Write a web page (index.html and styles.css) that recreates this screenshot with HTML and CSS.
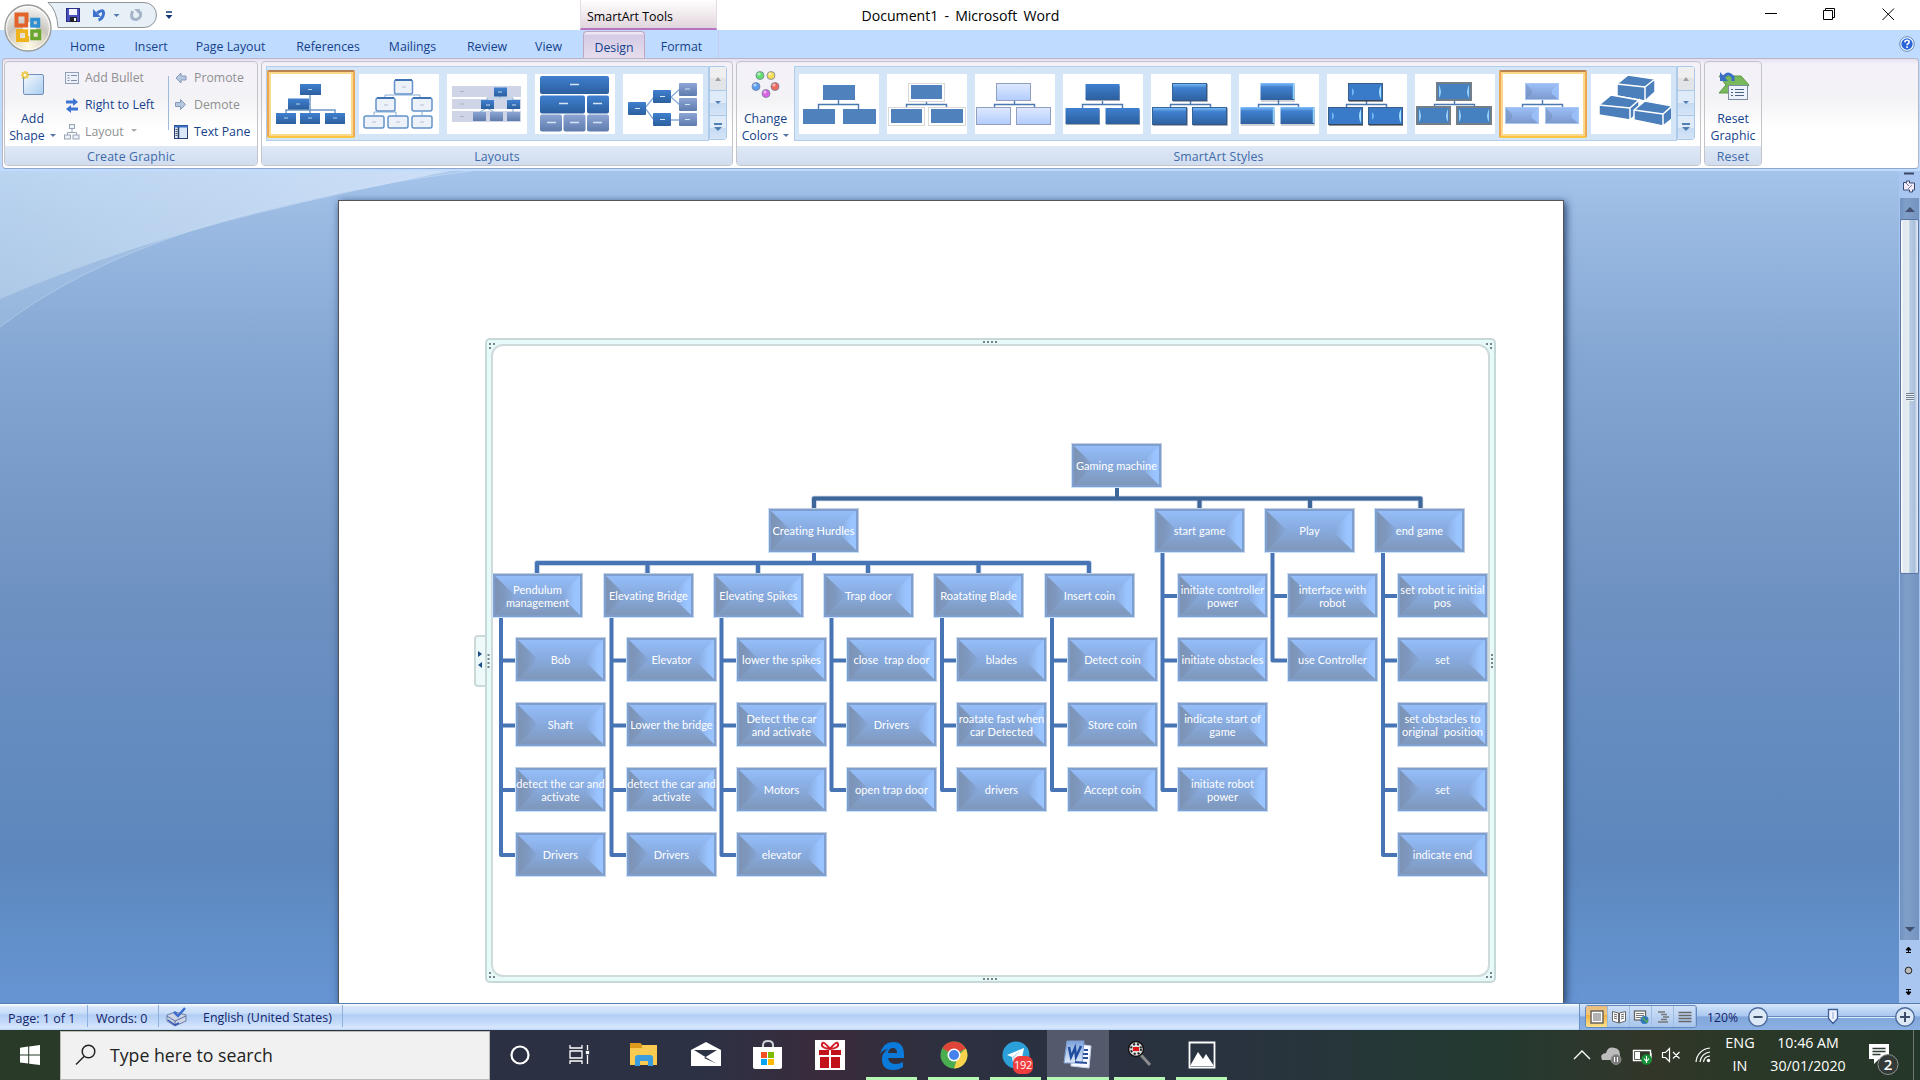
FILE: index.html
```html
<!DOCTYPE html>
<html lang="en">
<head>
<meta charset="utf-8">
<title>Document1 - Microsoft Word</title>
<link rel="stylesheet" href="styles.css">
</head>
<body>
<svg class="defs" width="0" height="0" aria-hidden="true">
  <defs>
    <linearGradient id="blue" x1="0" y1="0" x2="0" y2="1"><stop offset="0" stop-color="#3f80cf"/><stop offset="1" stop-color="#2c5f9e"/></linearGradient>
    <linearGradient id="pale" x1="0" y1="0" x2="0" y2="1"><stop offset="0" stop-color="#dfe9ff"/><stop offset="1" stop-color="#b2ccfd"/></linearGradient>
    <linearGradient id="gloss" x1="0" y1="0" x2="0" y2="1"><stop offset="0" stop-color="#7fc0fb"/><stop offset=".25" stop-color="#3f80cf"/><stop offset="1" stop-color="#2f619f"/></linearGradient>
    <linearGradient id="soft" x1="0" y1="0" x2="0" y2="1"><stop offset="0" stop-color="#9cbff8"/><stop offset="1" stop-color="#7d99cc"/></linearGradient>
    <linearGradient id="grey" x1="0" y1="0" x2="0" y2="1"><stop offset="0" stop-color="#8ca5d4"/><stop offset="1" stop-color="#5f7cae"/></linearGradient>
    <linearGradient id="sheet" x1="0" y1="0" x2="1" y2="1"><stop offset="0" stop-color="#f5faff"/><stop offset="1" stop-color="#a9cdf0"/></linearGradient>
    <linearGradient id="wbox" x1="0" y1="0" x2="0" y2="1"><stop offset="0" stop-color="#7da3dc"/><stop offset="1" stop-color="#dfe9f8"/></linearGradient>
    <radialGradient id="orb" cx=".5" cy=".9" r=".9"><stop offset="0" stop-color="#fffbe6"/><stop offset=".45" stop-color="#d9d3c4"/><stop offset=".55" stop-color="#c9c6c0"/><stop offset="1" stop-color="#fbfbfb"/></radialGradient>
    <linearGradient id="sky" x1="0" y1="0" x2="1" y2="0"><stop offset="0" stop-color="#d5e9f7" stop-opacity=".32"/><stop offset="1" stop-color="#dbe7fb" stop-opacity=".7"/></linearGradient>
    <symbol id="links" viewBox="0 0 80 60"><path d="M39.500 26v5M19.500 35v-4.500h40V35" fill="none" stroke="#4a78b0" stroke-width="1.400"/></symbol>
  </defs>
</svg>

<div class="app">
  <header class="titlebar">
    <svg class="qat" width="180" height="30" viewBox="0 0 180 30">
      <path d="M48 2.500H144a12.500 12.500 0 0 1 0 25H58Q57 10 48 2.500Z" fill="#e8f0f7" stroke="#8f9398"/>
      <rect x="66.500" y="8.500" width="13" height="13" fill="#4b50c0" stroke="#2b2d80"/><rect x="69" y="9" width="8" height="6" fill="#f4f6ff"/><rect x="70" y="17" width="7" height="5" fill="#222"/><rect x="74" y="18" width="2" height="3" fill="#fff"/>
      <path d="M97 13q7-5 6.500 1q-1 5-5 6" fill="none" stroke="#3d73cc" stroke-width="3"/><path d="M93 9v8h8z" fill="#3d73cc"/>
      <path d="M113.500 14h6l-3 3z" fill="#5079ae"/>
      <path d="M132.500 11q-3 9 4 8.500q6-2 3.500-8" fill="none" stroke="#a5b4c9" stroke-width="3"/><path d="M134 9h6v6z" fill="#a5b4c9"/>
      <path d="M166 12h6" stroke="#173a74" stroke-width="1.500"/><path d="M165.500 15h7l-3.500 4z" fill="#173a74"/>
    </svg>
    <div class="tools">SmartArt Tools</div>
    <div class="doc-title">Document1 - Microsoft Word</div>
    <svg class="winbtns" width="160" height="30" viewBox="0 0 160 30" fill="none" stroke="#000" stroke-width="1">
      <path d="M5 13.500h12"/><path d="M63.500 10.500h9v9h-9zM65.500 10.500v-2h9v9h-2"/><path d="M122.500 8.500l11.500 11.500M134 8.500L122.500 20"/>
    </svg>
  </header>
  <svg class="orb" width="50" height="50" viewBox="0 0 50 50">
    <circle cx="25" cy="25" r="23" fill="url(#orb)" stroke="#9a9c98" stroke-width="1.300"/><circle cx="25" cy="25" r="21.500" fill="none" stroke="#fff" stroke-opacity=".8"/>
    <g fill="none" stroke-width="4"><rect x="13.500" y="11.500" width="10" height="11" stroke="#e2622b"/><rect x="29" y="16.500" width="6.500" height="6.500" stroke="#2e90d3" stroke-width="3.500"/><rect x="15" y="28" width="9" height="9" stroke="#efb320"/><rect x="29" y="28" width="7.500" height="7.500" stroke="#68a62e" stroke-width="3.500"/></g>
    <path d="M20 25.500h13M26 19v14" stroke="#fff" stroke-width="1.500"/>
  </svg>

  <nav class="tabs">
    <span>Home</span><span>Insert</span><span>Page Layout</span><span>References</span><span>Mailings</span><span>Review</span><span>View</span><i></i><span class="active">Design</span><span class="ctx">Format</span>
    <svg class="help" width="16" height="16" viewBox="0 0 16 16"><circle cx="8" cy="8" r="6.300" fill="#2a66d8" stroke="#fff" stroke-width="1.200"/><circle cx="8" cy="8" r="7.300" fill="none" stroke="#5277ad" stroke-width=".8"/><path d="M5.800 6.300q.2-2 2.300-2t2.100 1.800q0 1-1.200 1.600-.9.500-.9 1.500M8.100 10.300v1.600" fill="none" stroke="#fff" stroke-width="1.600"/></svg>
  </nav>

  <section class="ribbon">
    <div class="group create">
      <div class="content">
        <div class="big add">
          <svg width="32" height="32" viewBox="0 0 32 32"><rect x="6.500" y="5.500" width="20" height="20" rx="1.500" fill="url(#sheet)" stroke="#7391b8"/><path d="M8 2v8M4 6h8M5 3l6 6M11 3L5 9" stroke="#e8c22e" stroke-width="1.500"/><circle cx="8" cy="6" r="1.500" fill="#fffbe0"/></svg>
          <span>Add</span><span>Shape <b class="caret"></b></span>
        </div>
        <div class="col first">
          <div class="cmd off"><svg width="16" height="16" viewBox="0 0 16 16"><rect x="1.500" y="2.500" width="13" height="11" fill="#eef2f8" stroke="#8fa0ba"/><path d="M3.500 5.500h2M3.500 8h2M3.500 10.500h2M7 5.500h6M7 10.500h6" stroke="#7c8fae"/></svg>Add Bullet</div>
          <div class="cmd"><svg width="16" height="16" viewBox="0 0 16 16"><path d="M2 3.500h7V1l5 4-5 4V6.500H2z" fill="#3c74d4"/><path d="M14 10.500H7V8l-5 4 5 4v-2.500h7z" fill="#3c74d4"/></svg>Right to Left</div>
          <div class="cmd off"><svg width="16" height="16" viewBox="0 0 16 16" fill="#eef1f6" stroke="#98a5b9"><path d="M8 5v4M3.500 11V8.500h9V11" fill="none"/><rect x="5.500" y=".5" width="5" height="4"/><rect x=".5" y="11" width="6" height="4"/><rect x="9" y="11" width="6" height="4"/></svg>Layout <b class="caret dim"></b></div>
        </div>
        <div class="col second">
          <div class="cmd off"><svg width="16" height="16" viewBox="0 0 16 16"><path d="M3 8l5-5v3h5v4H8v3z" fill="#b6c8de" stroke="#8499b8"/></svg>Promote</div>
          <div class="cmd off"><svg width="16" height="16" viewBox="0 0 16 16"><path d="M12.500 7.500l-5-5v3h-5v4h5v3z" fill="#b6c8de" stroke="#8499b8"/></svg>Demote</div>
          <div class="cmd"><svg width="16" height="16" viewBox="0 0 16 16"><rect x="1.500" y="1.500" width="13" height="13" fill="#dbe8f8" stroke="#27406f"/><path d="M1 2.500h14" stroke="#3a6dc8" stroke-width="2"/><path d="M5.500 3v11" stroke="#27406f" stroke-width="1.500"/><path d="M2.500 5.500h2M2.500 7.500h2M2.500 9.500h2M2.500 11.500h2" stroke="#555"/></svg>Text Pane</div>
        </div>
      </div>
      <div class="label">Create Graphic</div>
    </div>

    <div class="group layouts">
      <div class="content">
        <div class="gallery">
          <div class="thumb sel"><svg width="80" height="60" viewBox="0 0 80 60"><path d="M39 20v16M39 30H27M15 39v-3h49v3M39 36v4" fill="none" stroke="#6d97c8" stroke-width="1.500"/><g fill="url(#blue)"><rect x="29" y="10" width="21" height="11"/><rect x="17" y="24.500" width="21" height="11"/><rect x="5" y="39" width="20" height="11"/><rect x="29" y="39" width="20" height="11"/><rect x="54" y="39" width="20" height="11"/></g><path d="M37 15.500h4M25 30h4M13 44h4M37 44h4M62 44h4" stroke="#b8d3f2"/></svg></div>
          <div class="thumb"><svg width="80" height="60" viewBox="0 0 80 60"><path d="M26 24v-3h35v3M15 41v-3h22v4M63 38v4" fill="none" stroke="#88abd4"/><g fill="#edf1f9" stroke="#6493ca" stroke-width="1.500"><rect x="35.500" y="6" width="18" height="14" rx="2"/><rect x="17" y="24" width="19" height="13" rx="2"/><rect x="53" y="24" width="20" height="13" rx="2"/><rect x="5" y="42" width="20" height="12" rx="2"/><rect x="29" y="42" width="20" height="12" rx="2"/><rect x="53" y="42" width="20" height="12" rx="2"/></g><path d="M36 6h17M18 24h17M54 24h18" stroke="#3f73b3" stroke-width="2"/><path d="M43 13h4M25 31h4M61 31h4M13 48h4M37 48h4M61 48h4" stroke="#b3bfd3"/></svg></div>
          <div class="thumb"><svg width="80" height="60" viewBox="0 0 80 60"><g fill="#cfd5e6"><rect x="5" y="12" width="69" height="11"/><rect x="5" y="25" width="69" height="10"/><rect x="5" y="37" width="69" height="11"/></g><path d="M53 22v2M40 26v-2h26v2M33 38l7-4 7 4M66 35v4" fill="none" stroke="#86a8cf"/><g fill="url(#blue)"><rect x="47" y="13.500" width="13" height="9"/><rect x="34" y="26" width="13" height="9"/><rect x="60" y="26" width="13" height="9"/></g><g fill="url(#grey)"><rect x="26" y="38" width="13" height="9"/><rect x="43" y="38" width="13" height="9"/><rect x="60" y="38" width="13" height="9"/></g><path d="M13 17.500h4M13 30h4M13 42.500h4" stroke="#aab3cc"/><path d="M51 18h4M39 31h4M65 31h4" stroke="#c5daf3"/></svg></div>
          <div class="thumb"><svg width="80" height="60" viewBox="0 0 80 60"><g fill="url(#blue)"><rect x="5" y="2" width="69" height="18" rx="2"/><rect x="5" y="21.500" width="45" height="18" rx="2"/><rect x="52" y="21.500" width="22" height="18" rx="2"/></g><g fill="url(#grey)"><rect x="5" y="40.500" width="22" height="17" rx="2"/><rect x="28.500" y="40.500" width="22" height="17" rx="2"/><rect x="52" y="40.500" width="22" height="17" rx="2"/></g><path d="M35 10.500h9M24 29.500h9M58 29.500h9M12 48.500h9M35 48.500h9M58 48.500h9" stroke="#d5e4f6" stroke-width="1.500"/></svg></div>
          <div class="thumb"><svg width="80" height="60" viewBox="0 0 80 60"><path d="M22 34l9-11M22 34l9 12M48 23l9-8M48 23l9 8M48 46h9" stroke="#86abd9" stroke-width="1.300"/><g fill="url(#blue)"><rect x="5" y="28" width="18" height="13" rx="1"/><rect x="30" y="16" width="18" height="13" rx="1"/><rect x="30" y="39" width="18" height="13" rx="1"/></g><g fill="url(#grey)"><rect x="56" y="9" width="18" height="13" rx="1"/><rect x="56" y="24" width="18" height="13" rx="1"/><rect x="56" y="39" width="18" height="13" rx="1"/></g><path d="M12 34.500h5M37 22.500h5M37 45.500h5M62 15h5M62 30.500h5M62 45.500h5" stroke="#d5e4f6"/></svg></div>
        </div>
        <div class="spin"><b class="up"></b><b class="down"></b><b class="more"></b></div>
      </div>
      <div class="label">Layouts</div>
    </div>

    <div class="group styles">
      <div class="content">
        <div class="big change">
          <svg width="32" height="32" viewBox="0 0 32 32" stroke="#7480a0" stroke-width=".8"><circle cx="10" cy="6.500" r="4" fill="#63dd6e"/><circle cx="21" cy="6.500" r="4" fill="#f4dc57"/><circle cx="6" cy="17.500" r="4" fill="#5a9df0"/><circle cx="25" cy="17.500" r="4" fill="#f0695c"/><circle cx="16" cy="24.500" r="4" fill="#da62e2"/><g fill="#fff" fill-opacity=".55" stroke="none"><circle cx="9" cy="5" r="1.600"/><circle cx="20" cy="5" r="1.600"/><circle cx="5" cy="16" r="1.600"/><circle cx="24" cy="16" r="1.600"/><circle cx="15" cy="23" r="1.600"/></g></svg>
          <span>Change</span><span>Colors <b class="caret"></b></span>
        </div>
        <div class="gallery">
          <div class="thumb"><svg width="80" height="60" viewBox="0 0 80 60"><use href="#links"/><g fill="#4f81bd"><rect x="24" y="11" width="32" height="15"/><rect x="4" y="35" width="32" height="15"/><rect x="44" y="35" width="33" height="15"/></g></svg></div>
          <div class="thumb"><svg width="80" height="60" viewBox="0 0 80 60"><use href="#links"/><g fill="#fff" stroke="#d9d9d9"><rect x="21.500" y="9.500" width="36" height="18"/><rect x="1.500" y="33.500" width="36" height="18"/><rect x="41.500" y="33.500" width="37" height="18"/></g><g fill="#4f81bd"><rect x="24" y="11" width="31" height="14"/><rect x="4" y="35" width="31" height="14"/><rect x="44" y="35" width="32" height="14"/></g></svg></div>
          <div class="thumb"><svg width="80" height="60" viewBox="0 0 80 60"><use href="#links"/><g fill="url(#pale)" stroke="#939fbc"><rect x="21.500" y="9.500" width="34" height="17"/><rect x="1.500" y="33.500" width="34" height="17"/><rect x="41.500" y="33.500" width="34" height="17"/></g></svg></div>
          <div class="thumb"><svg width="80" height="60" viewBox="0 0 80 60"><use href="#links"/><g fill="#a4a9b3"><rect x="23" y="12" width="34" height="15"/><rect x="3" y="36" width="34" height="15"/><rect x="43" y="36" width="34" height="15"/></g><g fill="url(#blue)"><rect x="22.500" y="10" width="34" height="16"/><rect x="2.500" y="34" width="34" height="16"/><rect x="42.500" y="34" width="34" height="16"/></g></svg></div>
          <div class="thumb"><svg width="80" height="60" viewBox="0 0 80 60"><use href="#links"/><g fill="url(#gloss)" stroke="#35649b"><rect x="21.500" y="9.500" width="34" height="17"/><rect x="1.500" y="33.500" width="34" height="17"/><rect x="41.500" y="33.500" width="34" height="17"/></g><path d="M56 10v17H22M36 34v17H2M76 34v17H42" fill="none" stroke="#344b6b" stroke-opacity=".6" stroke-width="1.500"/></svg></div>
          <div class="thumb"><svg width="80" height="60" viewBox="0 0 80 60"><use href="#links"/><g fill="url(#gloss)"><rect x="21.500" y="9" width="34" height="17"/><rect x="1.500" y="33" width="34" height="17"/><rect x="41.500" y="33" width="34" height="17"/></g><path d="M54.500 10v15M34.500 34v15M74.500 34v15" stroke="#8fd0f8" stroke-width="1.500"/><path d="M56 27H22M36 51H2M76 51H42" stroke="#456" stroke-opacity=".5"/></svg></div>
          <div class="thumb"><svg width="80" height="60" viewBox="0 0 80 60"><use href="#links"/><g fill="#397ac9" stroke="#3b5d88"><rect x="21.500" y="9.500" width="34" height="17"/><rect x="1.500" y="33.500" width="34" height="17"/><rect x="41.500" y="33.500" width="34" height="17"/></g><path d="M54 11q-4 7 0 14zM34 35q-4 7 0 14zM74 35q-4 7 0 14z" fill="#a4e1ff"/><path d="M25 14q4 4 0 8zM5 38q4 4 0 8zM45 38q4 4 0 8z" fill="#75b8f5"/><path d="M56 27H22M36 51H2M76 51H42" stroke="#333" stroke-opacity=".7" stroke-width="1.500"/></svg></div>
          <div class="thumb"><svg width="80" height="60" viewBox="0 0 80 60"><use href="#links"/><g fill="#4580c0" stroke="#737e89" stroke-width="2"><rect x="22" y="9" width="34" height="17"/><rect x="2" y="33" width="33" height="17"/><rect x="42" y="33" width="34" height="17"/></g><path d="M24 11q4 7 0 13M54 11q-4 7 0 13M4 35q4 7 0 13M33 35q-4 7 0 13M44 35q4 7 0 13M74 35q-4 7 0 13" fill="#98d0f5"/></svg></div>
          <div class="thumb sel"><svg width="80" height="60" viewBox="0 0 80 60"><use href="#links"/><g fill="url(#soft)" stroke="#a9c6f3"><rect x="22.500" y="9.500" width="33" height="16"/><rect x="2.500" y="33.500" width="33" height="16"/><rect x="42.500" y="33.500" width="33" height="16"/></g><path d="M23 10l6 6v4l-6 5zM3 34l6 6v4l-6 5zM43 34l6 6v4l-6 5z" fill="#7590bd" fill-opacity=".55"/><path d="M55 10l-6 6v4l6 5zM35 34l-6 6v4l6 5zM75 34l-6 6v4l6 5z" fill="#9cc4ff" fill-opacity=".8"/></svg></div>
          <div class="thumb"><svg width="80" height="60" viewBox="0 0 80 60" fill="#4a7fbb" stroke="#fff" stroke-width="1.500"><path d="M26 10l11-9 27 4-10 8v14l-28-5zM54 13l10-8v13l-10 9z"/><path d="M8 31l12-10 28 5-9 8v12L8 41zM39 34l9-8v12l-9 8z"/><path d="M43 36l11-9 27 5-9 8v12l-29-6zM72 40l9-8v13l-9 7z"/><path d="M26 10l28 3M8 31l31 3M43 36l29 4" fill="none"/></svg></div>
        </div>
        <div class="spin"><b class="up"></b><b class="down"></b><b class="more"></b></div>
      </div>
      <div class="label">SmartArt Styles</div>
    </div>

    <div class="group reset">
      <div class="content">
        <div class="big">
          <svg width="34" height="32" viewBox="0 0 34 32"><path d="M3 7h22l8 9-7 8H3l7-8z" fill="#78b95c" stroke="#5d9746"/><rect x="12.500" y="16.500" width="19" height="14" fill="#edf3fa" stroke="#7b8ca3"/><path d="M15 20.500h2M15 23.500h2M15 26.500h2M19 20.500h9M19 23.500h9M19 26.500h9" stroke="#4c6280"/><path d="M8 8q4-6 9 0v4" fill="none" stroke="#3b6fc6" stroke-width="3"/><path d="M4 3v9h8z" fill="#3b6fc6"/></svg>
          <span>Reset</span><span>Graphic</span>
        </div>
      </div>
      <div class="label">Reset</div>
    </div>
  </section>

  <main class="workspace">
    <svg class="sweep" width="480" height="160" viewBox="0 0 480 160"><path d="M0 0H472Q150 40 0 156Z" fill="#dcebfa" fill-opacity=".17"/><path d="M0 0H450C330 25 170 55 0 128Z" fill="url(#sky)"/><path d="M472 0Q150 40 0 156" fill="none" stroke="#d5e5fa" stroke-opacity=".4"/></svg>
    <article class="page">
      <div class="frame-tab"><b></b><i></i></div>
      <div class="frame"><div class="canvas"></div>
        <svg class="grips" width="1011" height="645" viewBox="0 0 1011 645" stroke="#7a8288" stroke-width="2" fill="none"><path d="M4 6h2M8 6h2M4 10h2M1001 6h2M1005 6h2M1005 10h2M1001 639h2M1005 639h2M1005 635h2M4 639h2M8 639h2M4 635h2M498 4h2M502 4h2M506 4h2M510 4h2M498 641h2M502 641h2M506 641h2M510 641h2M2.500 317h2M2.500 321h2M2.500 325h2M2.500 329h2M1006 317h2M1006 321h2M1006 325h2M1006 329h2"/></svg>
      </div>
      <div class="diagram">
        <svg class="wires" width="1011" height="645" viewBox="486 338 1011 645" fill="none" stroke-linejoin="round">
          <g stroke="#b9cbe4" stroke-width="5.500"><path d="M814 509V498.500H1420.500V509M1199.500 498v11M1310 498v11M537 574V563H1089V574M647.500 563v11M758 563v11M868 563v11M978.500 563v11"/></g>
          <g stroke="#3e6699" stroke-width="4"><path d="M814 509V498.500H1420.500V509M1117 488v12M1199.500 498v11M1310 498v11"/></g>
          <g stroke="#4674b5" stroke-width="4"><path d="M537 574V563H1089V574M814 553v12M647.500 563v11M758 563v11M868 563v11M978.500 563v11"/>
            <path d="M501 618V855h15M501 660.500h15M501 725.500h15M501 790h15"/>
            <path d="M611.500 618V855h15M611.500 660.500h15M611.500 725.500h15M611.500 790h15"/>
            <path d="M721.500 618V855h15M721.500 660.500h15M721.500 725.500h15M721.500 790h15"/>
            <path d="M831.500 618V790h15M831.500 660.500h15M831.500 725.500h15"/>
            <path d="M942 618V790h15M942 660.500h15M942 725.500h15"/>
            <path d="M1052 618V790h15M1052 660.500h15M1052 725.500h15"/>
            <path d="M1162.500 553V790h15M1162.500 596h15M1162.500 660.500h15M1162.500 725.500h15"/>
            <path d="M1272.500 553V660.500h15M1272.500 596h15"/>
            <path d="M1383 553V855h15M1383 596h15M1383 660.500h15M1383 725.500h15M1383 790h15"/></g>
        </svg>
        <div class="node root r0">Gaming machine</div>
        <div class="node hurdles r1">Creating Hurdles</div><div class="node b7 r1">start game</div><div class="node b8 r1">Play</div><div class="node b9 r1">end game</div>
        <div class="node b1 r2">Pendulum<br>management</div><div class="node b2 r2">Elevating Bridge</div><div class="node b3 r2">Elevating Spikes</div><div class="node b4 r2">Trap door</div><div class="node b5 r2">Roatating Blade</div><div class="node b6 r2">Insert coin</div>
        <div class="node l1 r3">Bob</div><div class="node l1 r4">Shaft</div><div class="node l1 r5">detect the car and<br>activate</div><div class="node l1 r6">Drivers</div>
        <div class="node l2 r3">Elevator</div><div class="node l2 r4">Lower the bridge</div><div class="node l2 r5">detect the car and<br>activate</div><div class="node l2 r6">Drivers</div>
        <div class="node l3 r3">lower the spikes</div><div class="node l3 r4">Detect the car<br>and activate</div><div class="node l3 r5">Motors</div><div class="node l3 r6">elevator</div>
        <div class="node l4 r3">close &nbsp;trap door</div><div class="node l4 r4">Drivers</div><div class="node l4 r5">open trap door</div>
        <div class="node l5 r3">blades</div><div class="node l5 r4">roatate fast when<br>car Detected</div><div class="node l5 r5">drivers</div>
        <div class="node l6 r3">Detect coin</div><div class="node l6 r4">Store coin</div><div class="node l6 r5">Accept coin</div>
        <div class="node l7 r2">initiate controller<br>power</div><div class="node l7 r3">initiate obstacles</div><div class="node l7 r4">indicate start of<br>game</div><div class="node l7 r5">initiate robot<br>power</div>
        <div class="node l8 r2">interface with<br>robot</div><div class="node l8 r3">use Controller</div>
        <div class="node l9 r2">set robot ic initial<br>pos</div><div class="node l9 r3">set</div><div class="node l9 r4">set obstacles to<br>original &nbsp;position</div><div class="node l9 r5">set</div><div class="node l9 r6">indicate end</div>
      </div>
    </article>
    <aside class="scroll">
      <svg width="21" height="27" viewBox="0 0 21 27"><path d="M5 2.500h10" stroke="#3a4766" stroke-width="2"/><path d="M4.500 11.500h3v-1.500h3v2h5v7h-2v2h-3v-2h-6z" fill="#f3ecf8" stroke="#394b70"/><path d="M7 12l3 3M9 18l4-4" stroke="#394b70" stroke-width=".7"/></svg>
      <div class="track"><b class="up"></b><div class="thumb-bar"><i></i></div><b class="down"></b></div>
      <svg width="21" height="63" viewBox="0 0 21 63"><path d="M7 10l2.500-3 2.500 3zM7 12.500h5M9.500 9v4" fill="#000" stroke="#000"/><circle cx="9.500" cy="30.500" r="3.300" fill="#bbb" stroke="#222"/><path d="M7 52l2.500 3 2.500-3zM7 49.500h5M9.500 49v4" fill="#000" stroke="#000"/></svg>
    </aside>
  </main>

  <footer class="status">
    <span class="s1">Page: 1 of 1</span><span class="s2">Words: 0</span>
    <span class="s3"><svg width="22" height="20" viewBox="0 0 22 20"><path d="M1 8l8-3 11 3v6l-11 5-8-5z" fill="#cdd5e4" stroke="#6c7fa6"/><path d="M1 9l8 5 11-5M9 14v5" fill="none" stroke="#5b6fa0"/><path d="M2 13l7 5 4-2" fill="none" stroke="#2f57b8" stroke-width="1.500"/><path d="M8 5l4 4L19 1" fill="none" stroke="#3d6bd0" stroke-width="2.500"/></svg>English (United States)</span>
    <div class="view">
      <div class="modes">
        <b class="on"><svg width="16" height="16" viewBox="0 0 16 16"><rect x="2" y="2" width="12" height="12" fill="#fff" stroke="#6a655c" stroke-width="1.500"/><path d="M4 5h8M4 7h8M4 9h8M4 11h8" stroke="#666"/></svg></b>
        <b><svg width="16" height="16" viewBox="0 0 16 16"><path d="M1.500 2.500l6 1.500v10l-6-2zM14.500 2.500l-6 1.500v10l6-2z" fill="#fff" stroke="#666"/><path d="M3 5l3 1M3 7l3 1M3 9l3 1M13 5l-3 1M13 7l-3 1M13 9l-3 1" stroke="#666"/></svg></b>
        <b><svg width="16" height="16" viewBox="0 0 16 16"><rect x="1.500" y="2" width="11" height="9" fill="#fff" stroke="#666" stroke-width="1.300"/><path d="M3 4.500h8M3 6.500h8M3 8.500h5" stroke="#777"/><circle cx="11.500" cy="11" r="4" fill="#3078b8"/><path d="M9 10q2-3 3 0t3 0v3q-2 2-3-1z" fill="#55a552"/></svg></b>
        <b><svg width="16" height="16" viewBox="0 0 16 16"><path d="M3 3h7M6 5.500h6M8 8h6M6 10.500h6M3 13h10" stroke="#777" stroke-width="1.500"/></svg></b>
        <b><svg width="16" height="16" viewBox="0 0 16 16"><path d="M1.500 3.500h13M1.500 6.500h13M1.500 9.500h13M1.500 12.500h13" stroke="#666" stroke-width="1.600"/></svg></b>
      </div>
      <span class="pct">120%</span>
      <svg width="174" height="26" viewBox="0 0 174 26"><path d="M22 12.500h130" stroke="#6488bd"/><path d="M22 13.500h130" stroke="#dfeafb"/><g fill="#dde8f7" stroke="#4b6a9c" stroke-width="1.400"><circle cx="12" cy="13" r="9.300"/><circle cx="159" cy="13" r="9.300"/></g><path d="M7.500 13h9M154 13h10M159 8v10" stroke="#3e4d68" stroke-width="2"/><path d="M82.500 5.500h9v9l-4.500 5-4.500-5z" fill="#eef4fd" stroke="#3f6097" stroke-width="1.300"/><path d="M87 8v7" stroke="#8ba6cc"/></svg>
    </div>
  </footer>

  <footer class="taskbar">
    <div class="start"><svg width="20" height="20" viewBox="0 0 20 20" fill="#fff"><path d="M0 2.800l8.200-1.200v8H0zM9.200 1.400L20 0v9.500H9.200zM0 10.600h8.200v8L0 17.400zM9.200 10.600H20V20L9.200 18.700z"/></svg></div>
    <div class="search"><svg width="22" height="22" viewBox="0 0 22 22" fill="none" stroke="#222" stroke-width="1.500"><circle cx="13.500" cy="7.500" r="6.300"/><path d="M9 12.500L1 20.500"/></svg><span>Type here to search</span></div>
    <div class="apps">
      <b><svg width="32" height="32" viewBox="0 0 32 32"><circle cx="16" cy="16" r="8.500" fill="none" stroke="#fff" stroke-width="2.200"/></svg></b>
      <b><svg width="32" height="32" viewBox="0 0 32 32" fill="none" stroke="#fff" stroke-width="1.300"><path d="M4 6v3h12V6M4 25v-3h12v3M4 12h12v7H4zM21.500 6v5M21.500 16v9"/><rect x="20.500" y="12.500" width="2" height="2" fill="#fff"/></svg></b>
      <b><svg width="32" height="32" viewBox="0 0 32 32"><path d="M2 4h10l2 2h15v20H2z" fill="#f9cb50"/><path d="M2 4h10l2 2v3H2z" fill="#dc9b1b"/><path d="M7 27V19q0-3 3-3h12q3 0 3 3v8h-5v-5h-8v5z" fill="#3b9de0"/></svg></b>
      <b><svg width="32" height="32" viewBox="0 0 32 32"><path d="M1 11L16 3l15 8v16H1z" fill="#fff"/><path d="M4 11h23L14 19l12 5.500z" fill="#2b3344"/></svg></b>
      <b><svg width="32" height="32" viewBox="0 0 32 32"><path d="M11 9V6q0-4 5-4t5 4v3" fill="none" stroke="#ccd2d6" stroke-width="2"/><path d="M1 8h29v20q0 2-2 2H3q-2 0-2-2z" fill="#fff"/><path d="M9 13h6v6H9z" fill="#f25022"/><path d="M16 13h6v6h-6z" fill="#7fba00"/><path d="M9 20h6v6H9z" fill="#00a4ef"/><path d="M16 20h6v6h-6z" fill="#ffb900"/></svg></b>
      <b><svg width="32" height="32" viewBox="0 0 32 32"><path d="M1 1h30v30H1z" fill="#fff"/><path d="M5 11h10v5H5zM17 11h10v5H17zM6 18h9v11H6zM17 18h9v11h-9z" fill="#c01218"/><path d="M16 10Q7 9 8 5t8 5q7-9 8-5t-8 5" fill="none" stroke="#d12027" stroke-width="2"/></svg></b>
      <b class="run"><svg width="32" height="32" viewBox="0 0 32 32"><path d="M4 15Q7 3 17 3q11 0 11 13v3H12q1 6 8 6 4 0 7-2v5q-4 3-10 3Q6 31 6 20q0-6 6-10-6 1-8 5zm8-1h9q0-5-4-5t-5 5z" fill="#0b7bdb" fill-rule="evenodd"/></svg></b>
      <b class="run"><svg width="32" height="32" viewBox="0 0 32 32"><circle cx="16" cy="16" r="13.500" fill="#4aad50"/><path d="M16 16L4.300 9.300A13.500 13.500 0 0 1 27.700 9.300z" fill="#df4639"/><path d="M27.700 9.300A13.500 13.500 0 0 1 16 29.500L20 17z" fill="#f9d14d"/><path d="M16 9.500h12" stroke="#df4639" stroke-width="1"/><circle cx="16" cy="16" r="6.500" fill="#fff"/><circle cx="16" cy="16" r="5" fill="#4582ee"/></svg></b>
      <b class="run tg"><svg width="32" height="32" viewBox="0 0 32 32"><circle cx="16" cy="16" r="13.500" fill="#2ca0d9"/><path d="M7 16L24 9l-3 15-5-4-3 3-1-5z" fill="#fff"/><path d="M12 18l9-7-7 8-1 4z" fill="#c7ddec"/></svg><em>192</em></b>
      <b class="run cur"><svg width="32" height="32" viewBox="0 0 32 32"><path d="M9 4l20 3-2 22-18-2z" fill="#f6f9ff" stroke="#c2d0e8"/><path d="M5 2h17l-2 22H2z" fill="url(#wbox)" stroke="#7f9fd4"/><path d="M7 8l2 10 4-9 1 9 5-11" fill="none" stroke="#1f4c9e" stroke-width="2.400"/><path d="M22 11h4M21 15h5M21 19h5M13 23l12 1" stroke="#2b4f9a" stroke-width="2"/></svg></b>
      <b class="run"><svg width="32" height="32" viewBox="0 0 32 32"><path d="M17 16l9 10" stroke="#8b8b8b" stroke-width="3"/><circle cx="12" cy="10" r="7.500" fill="#dedede" stroke="#111" stroke-width="1.500"/><circle cx="12" cy="10" r="5" fill="none" stroke="#222" stroke-width="2" stroke-dasharray="2 2"/><path d="M9 8h6v4H9z" fill="#d91717"/></svg></b>
      <b class="run"><svg width="32" height="32" viewBox="0 0 32 32"><path d="M3.500 3.500h25v25h-25z" fill="none" stroke="#fff" stroke-width="1.800"/><path d="M4 27l8-14 5 7 3-5 8 12z" fill="#fff"/></svg></b>
    </div>
    <div class="tray">
      <svg width="150" height="30" viewBox="0 0 150 30" fill="none" stroke="#fff" stroke-width="1.400">
        <path d="M4 19l8-8 8 8"/>
        <path d="M32 20q-3-6 4-7 2-7 9-5 5 1 5 7v5z" fill="#bcbcbc" stroke="none"/><circle cx="46" cy="19.500" r="5" fill="#777" stroke="#999" stroke-width=".8"/><path d="M44.500 17v5M47.500 17v5" stroke-width="1.100"/>
        <path d="M63.500 10.500h17v10h-17zM81 13v5"/><path d="M65 12h5v7h-5z" fill="#fff" stroke="none"/><circle cx="76.500" cy="19.500" r="5.300" fill="#169138" stroke="none"/><path d="M76.500 16v7M74 18.500l2.500 3 2.500-3" stroke-width="1.100"/>
        <path d="M92.500 12.500h3l4-4v13l-4-4h-3zM103 12l6.500 6.500M109.500 12L103 18.500" stroke-width="1.200"/>
        <path d="M126 22A15 15 0 0 1 140 8M130 22A11 11 0 0 1 140 12M133.500 22A7 7 0 0 1 140 16" stroke-width="1.200"/><circle cx="138.500" cy="20.500" r="1.700" fill="#fff" stroke="none"/>
      </svg>
      <div class="two lang"><span>ENG</span><span>IN</span></div>
      <div class="two clock"><span>10:46 AM</span><span>30/01/2020</span></div>
      <svg class="note" width="34" height="34" viewBox="0 0 34 34"><path d="M3 1h20v15H13l-5 5v-5H3z" fill="#fff"/><path d="M6.500 5.500h13M6.500 8.500h13M6.500 11.500h8" stroke="#2c3c30" stroke-width="1.300"/><circle cx="22" cy="21.500" r="10" fill="#343a37" stroke="#8d918f"/><text x="22" y="27" text-anchor="middle">2</text></svg>
    </div>
  </footer>
</div>
</body>
</html>
```
FILE: styles.css
```css
* { box-sizing: border-box; }
body { margin: 0; width: 1920px; height: 1080px; overflow: hidden; font-family: "Open Sans", "Noto Sans", sans-serif; font-size: 12.3px; color: #15428b; }
svg { display: block; flex: none; }
b, i, em { font-weight: normal; font-style: normal; }
.defs { position: absolute; }
.app { position: relative; display: flex; flex-direction: column; width: 1920px; height: 1080px; background: #bfdbff; }

/* Title bar */
.titlebar { height: 30px; flex: none; background: #fff; display: flex; color: #000; }
.tools { margin-left: 400px; width: 139px; height: 30px; padding: 8px 0 0 6px; font-size: 12.4px; line-height: 18px; background: linear-gradient(#fff, #eee6ea 60%, #e0d5de); border-bottom: 2px solid #b573c0; border-left: 1px solid #e4dbe6; border-right: 1px solid #e4dbe6; white-space: nowrap; }
.doc-title { margin-left: 144px; width: 300px; font-size: 14.1px; line-height: 31px; word-spacing: 2.500px; white-space: nowrap; }
.winbtns { margin-left: 602px; }
.orb { position: absolute; left: 3px; top: 3px; }

/* Tabs */
.tabs { height: 28px; flex: none; display: grid; grid-template-columns: 63px 64px 95px 100px 69px 80px 43px 13px 62px 74px 1fr; padding-left: 56px; line-height: 34px; text-align: center; }
.tabs .active { margin-top: 1px; line-height: 31px; background: linear-gradient(#f0e6f3 0 2px, #d5cbe4 3px, #ebe2f0); border: 1px solid #bda8c0; border-bottom: 0; border-radius: 4px 4px 0 0; }
.tabs .ctx { border-right: 1px solid #c9cbe8; }
.help { justify-self: end; margin: 6px 5px 0 0; }

/* Ribbon */
.ribbon { height: 111px; flex: none; margin: 0 1px 2px 2px; padding: 2px 0 1px 1px; display: flex; gap: 3px; border: 1px solid #b9b6c4; border-bottom-color: #8ea6c9; border-radius: 4px; background: linear-gradient(#e4e0f0 0, #f4f1f9 5px, #f3f3f6 40px, #fff 70px, #fff); }
.group { height: 105px; border: 1px solid #c3c3c9; border-radius: 4px; display: flex; flex-direction: column; overflow: hidden; flex: none; }
.create { width: 254px; } .layouts { width: 472px; } .styles { width: 965px; } .reset { width: 58px; }
.content { height: 84px; flex: none; display: flex; }
.label { flex: 1; background: linear-gradient(#dfe8f5, #cfdcef); color: #3e6aaa; text-align: center; line-height: 21px; letter-spacing: .15px; }
.big { display: flex; flex-direction: column; align-items: center; line-height: 17px; padding-top: 7px; white-space: nowrap; }
.big svg { margin-bottom: 9px; }
.add { width: 55px; } .change { width: 57px; } .reset .big { width: 56px; }
.caret { display: inline-block; border: 3px solid transparent; border-top-color: #5577a8; border-bottom: 0; margin: 0 0 3px 2px; }
.caret.dim { border-top-color: #aaa; }
.col { display: flex; flex-direction: column; padding-top: 2px; }
.cmd { height: 27px; display: flex; align-items: center; gap: 5px; white-space: nowrap; }
.cmd.off { color: #909090; }
.first { width: 104px; margin-left: 4px; }
.second { margin-left: 5px; position: relative; }
.second::before { content: ""; position: absolute; left: -5px; top: 14px; width: 1px; height: 54px; background: #9dbad9; }
.gallery { display: flex; height: 75px; padding: 3px 0 0; margin-top: 4px; border: 1px solid #b2cdea; background: #d4e5f7; }
.layouts .gallery { margin-left: 4px; padding-right: 1px; }
.styles .gallery { padding-right: 1px; }
.thumb { width: 88px; height: 68px; padding: 4px; flex: none; }
.thumb svg { background: #fff; }
.thumb.sel { padding: 2px; border: 2px solid; border-color: #b98452 #f0a850 #f8c640 #f0a850; border-radius: 2px; background: #fbd98c; }
.spin { width: 18px; height: 74px; margin-top: 4px; display: flex; flex-direction: column; border: 1px solid #aac8e8; border-radius: 0 3px 3px 0; }
.spin b { flex: 1; display: flex; align-items: center; justify-content: center; background: linear-gradient(#dfebf9, #dfebf9 50%, #c5daf2 50%, #d5e5f8); border-bottom: 1px solid #aac8e8; }
.spin b:last-child { border-bottom: 0; }
.spin b::before { content: ""; border: 3px solid transparent; border-top: 3px solid #4f7fb5; border-bottom: 0; }
.spin .up { background: linear-gradient(#efefef 50%, #e2e4e7 50%); }
.spin .up::before { border-top: 0; border-bottom: 4px solid #a0a0a0; }
.spin .more { flex-direction: column; gap: 2px; }
.spin .more::before { order: 2; border-width: 4px 4px 0; }
.spin .more::after { content: ""; width: 8px; height: 2px; background: #4f7fb5; }

/* Workspace */
.workspace { flex: 1; position: relative; display: flex; justify-content: space-between; overflow: hidden; background: linear-gradient(#a5c4ec 0, #9bbbe3 45px, #83a6d2 190px, #6d91c1 430px, #5d87bd 690px, #6290ca 770px, #6794d3 832px); }
.sweep { position: absolute; left: 0; top: 0; }
.page { position: relative; margin: 29px 0 0 338px; width: 1226px; background: #fff; border: 1px solid #555; border-bottom: 0; box-shadow: 2px 2px 8px #24426e; }
.frame { position: absolute; left: 146px; top: 137px; width: 1011px; height: 645px; padding: 4px; background: #e7fafa; border: 2px solid #c6d8d8; border-radius: 5px; }
.canvas { height: 100%; background: #fff; border: 2px solid #cfdbdb; border-radius: 12px; }
.grips { position: absolute; left: -2px; top: -2px; }
.frame-tab { position: absolute; left: 135px; top: 434px; width: 13px; height: 52px; background: #eefafa; border: 2px solid #ccd9d9; border-radius: 4px 0 0 4px; }
.frame-tab b, .frame-tab i { display: block; margin: 14px 0 0 2px; width: 0; border: 3px solid transparent; border-left: 4px solid #1c4f8a; border-right: 0; }
.frame-tab i { margin-top: 5px; border-left: 0; border-right: 4px solid #1c4f8a; }
.diagram { position: absolute; left: 147px; top: 137px; width: 1011px; height: 645px; }
.wires { position: absolute; left: 0; top: 0; }
.node { position: absolute; width: 91px; height: 45px; display: flex; align-items: center; justify-content: center; text-align: center; white-space: nowrap; font: 11px/13px Lato, "Open Sans", sans-serif; letter-spacing: .06px; color: #fff; border: 1px solid; border-color: #c3cede #bccbe0 #c8e0fb #cfe4fb; box-shadow: inset 0 0 0 2px #7f9fce; background: linear-gradient(#96bffb, #87aade 50%, #7e95b6); z-index: 0; }
.node::before { content: ""; position: absolute; z-index: -1; inset: 2px; background: linear-gradient(90deg, #7c93b5, #7e97bd 10%, #87a9dc 24%, #87a9dc 80%, #9ac4ff 94%); clip-path: polygon(0 0, 20px 50%, calc(100% - 20px) 50%, 100% 0, 100% 100%, calc(100% - 20px) 50%, 20px 50%, 0 100%); }
.root { left: 585px; } .hurdles { left: 282px; }
.r0 { top: 105px; } .r1 { top: 170px; } .r2 { top: 235px; } .r3 { top: 299px; } .r4 { top: 364px; } .r5 { top: 429px; } .r6 { top: 494px; }
.b1 { left: 6px; } .b2 { left: 117px; } .b3 { left: 227px; } .b4 { left: 337px; } .b5 { left: 447px; } .b6 { left: 558px; } .b7 { left: 668px; } .b8 { left: 778px; } .b9 { left: 888px; }
.l1 { left: 29px; } .l2 { left: 140px; } .l3 { left: 250px; } .l4 { left: 360px; } .l5 { left: 470px; } .l6 { left: 581px; } .l7 { left: 691px; } .l8 { left: 801px; } .l9 { left: 911px; }

/* Scroll bar */
.scroll { width: 21px; background: #a9c6f1; display: flex; flex-direction: column; }
.track { height: 742px; margin: 0 1px; background: linear-gradient(90deg, #6f92c2, #809fc8 30%, #7494c0); display: flex; flex-direction: column; align-items: center; }
.track b { width: 0; border: 5px solid transparent; }
.track .up { margin: 4px 0 7px; border-bottom: 5px solid #44506f; border-top-width: 1px; height: 10px; }
.track .down { margin-top: auto; border-top-color: #44506f; margin-bottom: 7px; border-bottom-width: 1px; }
.thumb-bar { width: 19px; height: 355px; border: 1px solid #5c76a8; border-radius: 2px; background: linear-gradient(90deg, #fff, #dfe8ee 15%, #e5edf0 45%, #b9cde3 52%, #aabfdc 80%, #e9eff5); display: flex; align-items: center; justify-content: center; }
.thumb-bar i { width: 8px; height: 8px; background: repeating-linear-gradient(#758291 0 1px, #e8edf2 1px 2px); }

/* Status bar */
.status { height: 27px; flex: none; display: flex; border-top: 1px solid #567db1; background: linear-gradient(#fff 0, #d7e6fb 3px, #c9def9 9px, #b0cdf3 11px, #c4dafa 18px, #d8e7fd 24px, #b7d2f5); color: #14246a; font-size: 12.5px; line-height: 28px; white-space: nowrap; }
.status > span { border-right: 1px solid #8db0de; margin: 1px 0 3px; line-height: 27px; }
.s1 { width: 88px; padding-left: 8px; } .s2 { width: 71px; padding-left: 8px; } .s3 { width: 184px; padding: 2px 0 0 7px; display: flex; gap: 15px; align-items: center; font-size: 12.4px; }
.view { margin-left: auto; width: 341px; padding-left: 5px; display: flex; border-left: 1px solid #6790c8; background: linear-gradient(#d5e5fb, #aac8f0 45%, #80a6da 50%, #8cb0e4); }
.modes { display: flex; height: 23px; margin-top: 1px; border: 1px solid #6289be; border-radius: 3px; overflow: hidden; background: linear-gradient(#cfe0f7, #a9c6ec); }
.modes b { width: 22px; padding: 3px 0 0 3px; border-right: 1px solid #9dbbe3; }
.modes .on { background: linear-gradient(#e8bd80, #f4c77c 40%, #f5b13e 45%, #fbe28e); }
.pct { width: 49px; padding-left: 10px; font-size: 12.2px; }

/* Taskbar */
.taskbar { height: 50px; flex: none; display: flex; background: linear-gradient(90deg, #293a28 0, #293a28 60px, #2b3043 490px, #2c3144 700px, #3a2b3b 830px, #302f3e 900px, #2b3041 1000px, #29333f 1240px, #233a31 1480px, #323629 1650px, #2b3828 1720px, #253729 1920px); color: #fff; }
.start { width: 60px; padding: 15px 0 0 20px; }
.search { width: 430px; height: 49px; margin-top: 1px; background: #f1f1f1; border: 1px solid #bbb; color: #222; display: flex; align-items: center; gap: 13px; padding: 0 0 2px 14px; font-size: 17.7px; }
.apps { display: flex; margin-left: -1px; }
.apps b { width: 62px; height: 50px; padding: 9px 15px 0; position: relative; }
.apps .run::after { content: ""; position: absolute; bottom: 0; left: 5px; right: 6px; height: 3px; background: #b4f8b4; }
.apps .cur { background: #545a6b; }
.apps .cur::after { left: 0; right: 0; }
.tg em { position: absolute; left: 28px; top: 26px; width: 20px; height: 18px; border-radius: 7px; background: #f03e3e; font-size: 11px; line-height: 18px; text-align: center; letter-spacing: -.3px; }
.tray { margin-left: auto; width: 350px; display: flex; padding-top: 10px; }
.two { display: flex; flex-direction: column; text-align: center; line-height: 22.500px; font-size: 14.2px; margin-top: -8px; white-space: nowrap; }
.lang { width: 40px; font-size: 14.4px; } .clock { width: 96px; }
.note { margin-left: 10px; margin-top: 3px; }
.note text { font: 600 15px "Open Sans", sans-serif; fill: #fff; }
.tray::after { content: ""; width: 1px; height: 50px; margin: -10px 0 0 13px; background: #6d776e; }
```
